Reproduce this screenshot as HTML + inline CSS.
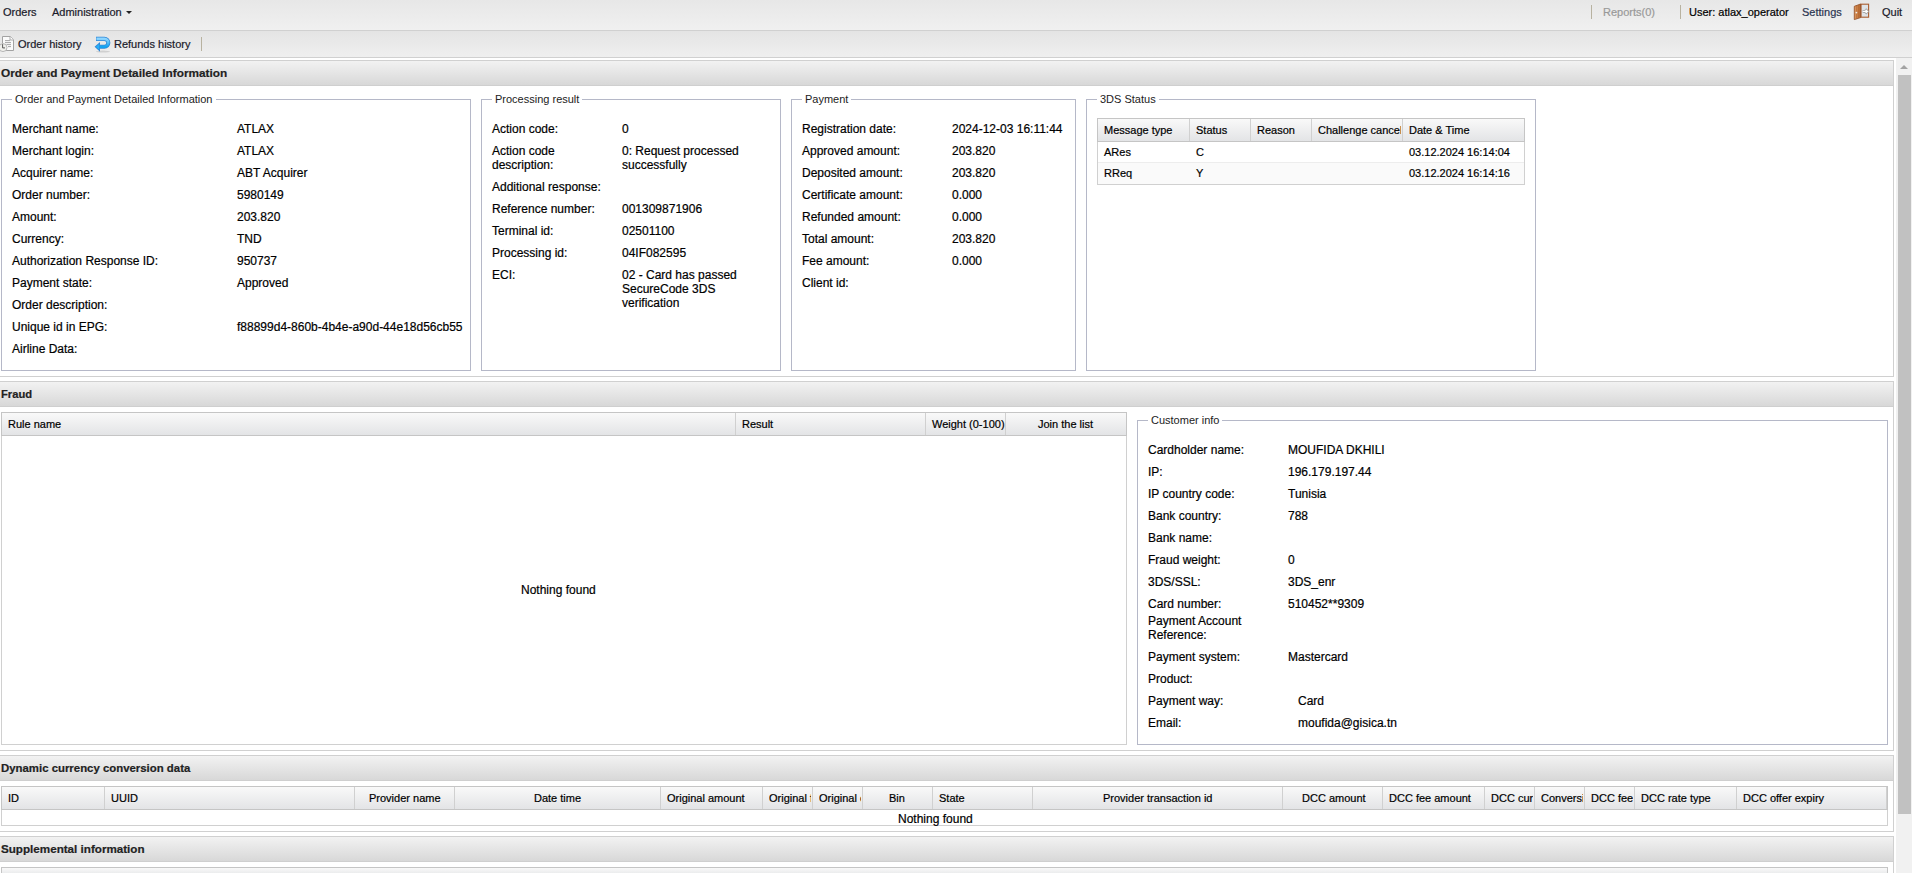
<!DOCTYPE html><html><head><meta charset="utf-8"><style>
html,body{margin:0;padding:0;width:1912px;height:873px;overflow:hidden;background:#fff;font-family:"Liberation Sans",sans-serif;}
.t{position:absolute;white-space:pre;line-height:14px;-webkit-text-stroke:0.2px currentColor;}
.b{position:absolute;box-sizing:border-box;}
.hdr{position:absolute;box-sizing:border-box;background:linear-gradient(#f2f2f2,#d8d8d8);border-top:1px solid #d0d0d0;border-bottom:1px solid #cfcfcf;}
.fs{position:absolute;box-sizing:border-box;border:1px solid #b5b8c8;}
.lg{position:absolute;background:#fff;padding:0 3px;font-size:11px;line-height:13px;color:#222;white-space:pre;}
.gh{position:absolute;box-sizing:border-box;background:linear-gradient(#f9f9f9,#e3e4e6);border:1px solid #c5c5c5;}
.gs{position:absolute;width:1px;background:#cfcfcf;}
</style></head><body>
<div class="b" style="left:0px;top:0px;width:1912px;height:30px;background:linear-gradient(#e7e7e7,#f0f0f0);"></div>
<div class="b" style="left:0px;top:30px;width:1912px;height:1px;background:#d0d0d0;"></div>
<div class="b" style="left:0px;top:31px;width:1912px;height:26px;background:linear-gradient(#e4e4e4,#efefef);"></div>
<div class="b" style="left:0px;top:57px;width:1912px;height:1px;background:#d0d0d0;"></div>
<div class="b" style="left:0px;top:58px;width:1912px;height:2px;background:#fff;"></div>
<div class="t" style="left:3px;top:5px;font-size:11px;color:#1a1a2a;">Orders</div>
<div class="t" style="left:52px;top:5px;font-size:11px;color:#1a1a2a;">Administration</div>
<div class="b" style="left:126px;top:11px;width:0;height:0;border-left:3px solid transparent;border-right:3px solid transparent;border-top:3px solid #222;"></div>
<div class="b" style="left:1591px;top:5px;width:1px;height:14px;background:#b8b2a0;"></div>
<div class="t" style="left:1603px;top:5px;font-size:11px;color:#999;">Reports(0)</div>
<div class="b" style="left:1680px;top:5px;width:1px;height:14px;background:#b8b2a0;"></div>
<div class="t" style="left:1689px;top:5px;font-size:11px;color:#000;">User: atlax_operator</div>
<div class="t" style="left:1802px;top:5px;font-size:11px;color:#2a3550;">Settings</div>
<svg class="b" style="left:1850px;top:0px" width="24" height="24" viewBox="0 0 24 24">
<defs><linearGradient id="dg" x1="0" x2="1" y1="0" y2="0"><stop offset="0" stop-color="#e09a60"/><stop offset="1" stop-color="#b5672f"/></linearGradient></defs>
<rect x="11" y="4.2" width="7.6" height="13" fill="#dfe3e7" stroke="#a95e32" stroke-width="1.1"/>
<path d="M12.6 11.4 h3.6 M15.3 9.3 l2.4 2.1 l-2.4 2.1" stroke="#9a9a9a" stroke-width="2.6" fill="none" stroke-linejoin="round"/>
<path d="M12.6 11.4 h3.8 M15.6 9.8 l1.8 1.6 l-1.8 1.6" stroke="#fff" stroke-width="1.3" fill="none"/>
<path d="M4.3 6.3 L10.6 4 L10.6 17.6 L4.3 19.6 Z" fill="url(#dg)" stroke="#8f4a22" stroke-width="0.8"/>
<path d="M6.6 6 v12.5 M8.6 5.2 v12.6" stroke="#a85a2a" stroke-width="0.6" opacity="0.7"/>
<circle cx="6.4" cy="12.6" r="0.9" fill="#eee"/>
</svg>
<div class="t" style="left:1882px;top:5px;font-size:11px;color:#1a1a2a;">Quit</div>
<svg class="b" style="left:0px;top:32px" width="20" height="24" viewBox="0 0 20 24">
<path d="M2.5 4.5 H10.3 L13.5 7.7 V18.5 H2.5 Z" fill="#fbfbfb" stroke="#a3a3a3" stroke-width="1"/>
<path d="M10 4.5 V8 H13.5" fill="#fff" stroke="#a3a3a3" stroke-width="0.9"/>
<path d="M5 8.6 H10 M5 10.6 H11 M6.5 12.6 H11 M8 14.6 H11" stroke="#9a9a9a" stroke-width="0.9"/>
<circle cx="3" cy="15.6" r="4" fill="#f0f0ec" stroke="#b8b8b8" stroke-width="1"/>
<path d="M2.6 12.2 V15.9 H5" stroke="#505050" stroke-width="0.95" fill="none"/>
</svg>
<div class="t" style="left:18px;top:37px;font-size:11px;color:#1a1a2a;">Order history</div>
<svg class="b" style="left:92px;top:32px" width="24" height="24" viewBox="0 0 24 24">
<defs><linearGradient id="rg" x1="0" x2="0" y1="0" y2="1"><stop offset="0" stop-color="#8fd6ff"/><stop offset="1" stop-color="#12a2f0"/></linearGradient></defs>
<ellipse cx="11" cy="19.6" rx="7" ry="1" fill="#000" opacity="0.12"/>
<path d="M4 6.9 H12.4 A3.9 3.9 0 0 1 12.4 14.7 H7.6" stroke="#2f86d6" stroke-width="4.1" fill="none"/>
<path d="M4.4 6.9 H12.4 A3.9 3.9 0 0 1 12.4 14.7 H7.6" stroke="url(#rg)" stroke-width="2.6" fill="none"/>
<path d="M2.6 14.8 L8 10 L8 19.8 Z" fill="#2f86d6"/>
<path d="M3.9 14.8 L7.3 11.7 L7.3 17.9 Z" fill="#26b0f8"/>
</svg>
<div class="t" style="left:114px;top:37px;font-size:11px;color:#1a1a2a;">Refunds history</div>
<div class="b" style="left:201px;top:37px;width:1px;height:14px;background:#b8b2a0;"></div>
<div class="b" style="left:1894px;top:58px;width:18px;height:815px;background:#f1f1f1;"></div>
<div class="b" style="left:1894px;top:58px;width:2px;height:815px;background:#fff;"></div>
<div class="b" style="left:1900px;top:65px;width:0;height:0;border-left:4px solid transparent;border-right:4px solid transparent;border-bottom:4px solid #a3a3a3;"></div>
<div class="b" style="left:1898px;top:75px;width:13px;height:739px;background:#c1c1c1;"></div>
<div class="hdr" style="left:0px;top:60px;width:1894px;height:26px;border-right:1px solid #d0d0d0;"></div>
<div class="t" style="left:1px;top:66px;font-size:11.8px;color:#222;font-weight:bold;">Order and Payment Detailed Information</div>
<div class="b" style="left:1893px;top:86px;width:1px;height:290px;background:#d0d0d0;"></div>
<div class="b" style="left:0px;top:376px;width:1894px;height:1px;background:#d0d0d0;"></div>
<div class="hdr" style="left:0px;top:381px;width:1894px;height:26px;border-right:1px solid #d0d0d0;"></div>
<div class="t" style="left:1px;top:387px;font-size:11.2px;color:#222;font-weight:bold;">Fraud</div>
<div class="b" style="left:1893px;top:407px;width:1px;height:343px;background:#d0d0d0;"></div>
<div class="b" style="left:0px;top:750px;width:1894px;height:1px;background:#d0d0d0;"></div>
<div class="hdr" style="left:0px;top:755px;width:1894px;height:26px;border-right:1px solid #d0d0d0;"></div>
<div class="t" style="left:1px;top:761px;font-size:11.4px;color:#222;font-weight:bold;">Dynamic currency conversion data</div>
<div class="b" style="left:1893px;top:781px;width:1px;height:50px;background:#d0d0d0;"></div>
<div class="b" style="left:0px;top:831px;width:1894px;height:1px;background:#d0d0d0;"></div>
<div class="hdr" style="left:0px;top:836px;width:1894px;height:26px;border-right:1px solid #d0d0d0;"></div>
<div class="t" style="left:1px;top:842px;font-size:11.65px;color:#222;font-weight:bold;">Supplemental information</div>
<div class="b" style="left:1893px;top:862px;width:1px;height:11px;background:#d0d0d0;"></div>
<div class="fs" style="left:1px;top:99px;width:470px;height:272px;"></div>
<div class="lg" style="left:12px;top:93px;">Order and Payment Detailed Information</div>
<div class="fs" style="left:481px;top:99px;width:300px;height:272px;"></div>
<div class="lg" style="left:492px;top:93px;">Processing result</div>
<div class="fs" style="left:791px;top:99px;width:285px;height:272px;"></div>
<div class="lg" style="left:802px;top:93px;">Payment</div>
<div class="fs" style="left:1086px;top:99px;width:450px;height:272px;"></div>
<div class="lg" style="left:1097px;top:93px;">3DS Status</div>
<div class="t" style="left:12px;top:122px;font-size:12px;color:#000;">Merchant name:</div>
<div class="t" style="left:237px;top:122px;font-size:12px;color:#000;">ATLAX</div>
<div class="t" style="left:12px;top:144px;font-size:12px;color:#000;">Merchant login:</div>
<div class="t" style="left:237px;top:144px;font-size:12px;color:#000;">ATLAX</div>
<div class="t" style="left:12px;top:166px;font-size:12px;color:#000;">Acquirer name:</div>
<div class="t" style="left:237px;top:166px;font-size:12px;color:#000;">ABT Acquirer</div>
<div class="t" style="left:12px;top:188px;font-size:12px;color:#000;">Order number:</div>
<div class="t" style="left:237px;top:188px;font-size:12px;color:#000;">5980149</div>
<div class="t" style="left:12px;top:210px;font-size:12px;color:#000;">Amount:</div>
<div class="t" style="left:237px;top:210px;font-size:12px;color:#000;">203.820</div>
<div class="t" style="left:12px;top:232px;font-size:12px;color:#000;">Currency:</div>
<div class="t" style="left:237px;top:232px;font-size:12px;color:#000;">TND</div>
<div class="t" style="left:12px;top:254px;font-size:12px;color:#000;">Authorization Response ID:</div>
<div class="t" style="left:237px;top:254px;font-size:12px;color:#000;">950737</div>
<div class="t" style="left:12px;top:276px;font-size:12px;color:#000;">Payment state:</div>
<div class="t" style="left:237px;top:276px;font-size:12px;color:#000;">Approved</div>
<div class="t" style="left:12px;top:298px;font-size:12px;color:#000;">Order description:</div>
<div class="t" style="left:12px;top:320px;font-size:12px;color:#000;">Unique id in EPG:</div>
<div class="t" style="left:237px;top:320px;font-size:12px;color:#000;">f88899d4-860b-4b4e-a90d-44e18d56cb55</div>
<div class="t" style="left:12px;top:342px;font-size:12px;color:#000;">Airline Data:</div>
<div class="t" style="left:492px;top:122px;font-size:12px;color:#000;">Action code:</div>
<div class="t" style="left:622px;top:122px;font-size:12px;color:#000;">0</div>
<div class="t" style="left:492px;top:144px;font-size:12px;color:#000;">Action code</div>
<div class="t" style="left:492px;top:158px;font-size:12px;color:#000;">description:</div>
<div class="t" style="left:622px;top:144px;font-size:12px;color:#000;">0: Request processed</div>
<div class="t" style="left:622px;top:158px;font-size:12px;color:#000;">successfully</div>
<div class="t" style="left:492px;top:180px;font-size:12px;color:#000;">Additional response:</div>
<div class="t" style="left:492px;top:202px;font-size:12px;color:#000;">Reference number:</div>
<div class="t" style="left:622px;top:202px;font-size:12px;color:#000;">001309871906</div>
<div class="t" style="left:492px;top:224px;font-size:12px;color:#000;">Terminal id:</div>
<div class="t" style="left:622px;top:224px;font-size:12px;color:#000;">02501100</div>
<div class="t" style="left:492px;top:246px;font-size:12px;color:#000;">Processing id:</div>
<div class="t" style="left:622px;top:246px;font-size:12px;color:#000;">04IF082595</div>
<div class="t" style="left:492px;top:268px;font-size:12px;color:#000;">ECI:</div>
<div class="t" style="left:622px;top:268px;font-size:12px;color:#000;">02 - Card has passed</div>
<div class="t" style="left:622px;top:282px;font-size:12px;color:#000;">SecureCode 3DS</div>
<div class="t" style="left:622px;top:296px;font-size:12px;color:#000;">verification</div>
<div class="t" style="left:802px;top:122px;font-size:12px;color:#000;">Registration date:</div>
<div class="t" style="left:952px;top:122px;font-size:12px;color:#000;">2024-12-03 16:11:44</div>
<div class="t" style="left:802px;top:144px;font-size:12px;color:#000;">Approved amount:</div>
<div class="t" style="left:952px;top:144px;font-size:12px;color:#000;">203.820</div>
<div class="t" style="left:802px;top:166px;font-size:12px;color:#000;">Deposited amount:</div>
<div class="t" style="left:952px;top:166px;font-size:12px;color:#000;">203.820</div>
<div class="t" style="left:802px;top:188px;font-size:12px;color:#000;">Certificate amount:</div>
<div class="t" style="left:952px;top:188px;font-size:12px;color:#000;">0.000</div>
<div class="t" style="left:802px;top:210px;font-size:12px;color:#000;">Refunded amount:</div>
<div class="t" style="left:952px;top:210px;font-size:12px;color:#000;">0.000</div>
<div class="t" style="left:802px;top:232px;font-size:12px;color:#000;">Total amount:</div>
<div class="t" style="left:952px;top:232px;font-size:12px;color:#000;">203.820</div>
<div class="t" style="left:802px;top:254px;font-size:12px;color:#000;">Fee amount:</div>
<div class="t" style="left:952px;top:254px;font-size:12px;color:#000;">0.000</div>
<div class="t" style="left:802px;top:276px;font-size:12px;color:#000;">Client id:</div>
<div class="b" style="left:1097px;top:118px;width:428px;height:67px;border:1px solid #d0d0d0;"></div>
<div class="gh" style="left:1097px;top:118px;width:428px;height:24px;"></div>
<div class="b" style="left:1189px;top:119px;width:1px;height:22px;background:#d0d0d0;"></div>
<div class="b" style="left:1250px;top:119px;width:1px;height:22px;background:#d0d0d0;"></div>
<div class="b" style="left:1311px;top:119px;width:1px;height:22px;background:#d0d0d0;"></div>
<div class="b" style="left:1402px;top:119px;width:1px;height:22px;background:#d0d0d0;"></div>
<div class="b" style="left:1098px;top:162px;width:426px;height:1px;background:#ededed;"></div>
<div class="b" style="left:1098px;top:163px;width:426px;height:21px;background:#fafafa;"></div>
<div class="t" style="left:1104px;top:123px;font-size:11px;color:#000;">Message type</div>
<div class="t" style="left:1196px;top:123px;font-size:11px;color:#000;">Status</div>
<div class="t" style="left:1257px;top:123px;font-size:11px;color:#000;">Reason</div>
<div class="t" style="left:1409px;top:123px;font-size:11px;color:#000;">Date &amp; Time</div>
<div class="t" style="left:1318px;top:123px;font-size:11px;width:83px;overflow:hidden;">Challenge cancel</div>
<div class="t" style="left:1104px;top:145px;font-size:11px;color:#000;">ARes</div>
<div class="t" style="left:1196px;top:145px;font-size:11px;color:#000;">C</div>
<div class="t" style="left:1409px;top:145px;font-size:11px;color:#000;">03.12.2024 16:14:04</div>
<div class="t" style="left:1104px;top:166px;font-size:11px;color:#000;">RReq</div>
<div class="t" style="left:1196px;top:166px;font-size:11px;color:#000;">Y</div>
<div class="t" style="left:1409px;top:166px;font-size:11px;color:#000;">03.12.2024 16:14:16</div>
<div class="b" style="left:1px;top:412px;width:1126px;height:333px;border:1px solid #d0d0d0;"></div>
<div class="gh" style="left:1px;top:412px;width:1126px;height:24px;"></div>
<div class="b" style="left:735px;top:413px;width:1px;height:22px;background:#d0d0d0;"></div>
<div class="b" style="left:925px;top:413px;width:1px;height:22px;background:#d0d0d0;"></div>
<div class="b" style="left:1005px;top:413px;width:1px;height:22px;background:#d0d0d0;"></div>
<div class="t" style="left:8px;top:417px;font-size:11px;color:#000;">Rule name</div>
<div class="t" style="left:742px;top:417px;font-size:11px;color:#000;">Result</div>
<div class="t" style="left:932px;top:417px;font-size:11px;color:#000;">Weight (0-100)</div>
<div class="t" style="left:1038px;top:417px;font-size:11px;color:#000;">Join the list</div>
<div class="t" style="left:521px;top:583px;font-size:12px;color:#000;">Nothing found</div>
<div class="fs" style="left:1137px;top:420px;width:751px;height:325px;"></div>
<div class="lg" style="left:1148px;top:414px;">Customer info</div>
<div class="t" style="left:1148px;top:443px;font-size:12px;color:#000;">Cardholder name:</div>
<div class="t" style="left:1288px;top:443px;font-size:12px;color:#000;">MOUFIDA DKHILI</div>
<div class="t" style="left:1148px;top:465px;font-size:12px;color:#000;">IP:</div>
<div class="t" style="left:1288px;top:465px;font-size:12px;color:#000;">196.179.197.44</div>
<div class="t" style="left:1148px;top:487px;font-size:12px;color:#000;">IP country code:</div>
<div class="t" style="left:1288px;top:487px;font-size:12px;color:#000;">Tunisia</div>
<div class="t" style="left:1148px;top:509px;font-size:12px;color:#000;">Bank country:</div>
<div class="t" style="left:1288px;top:509px;font-size:12px;color:#000;">788</div>
<div class="t" style="left:1148px;top:531px;font-size:12px;color:#000;">Bank name:</div>
<div class="t" style="left:1148px;top:553px;font-size:12px;color:#000;">Fraud weight:</div>
<div class="t" style="left:1288px;top:553px;font-size:12px;color:#000;">0</div>
<div class="t" style="left:1148px;top:575px;font-size:12px;color:#000;">3DS/SSL:</div>
<div class="t" style="left:1288px;top:575px;font-size:12px;color:#000;">3DS_enr</div>
<div class="t" style="left:1148px;top:597px;font-size:12px;color:#000;">Card number:</div>
<div class="t" style="left:1288px;top:597px;font-size:12px;color:#000;">510452**9309</div>
<div class="t" style="left:1148px;top:614px;font-size:12px;color:#000;">Payment Account</div>
<div class="t" style="left:1148px;top:628px;font-size:12px;color:#000;">Reference:</div>
<div class="t" style="left:1148px;top:650px;font-size:12px;color:#000;">Payment system:</div>
<div class="t" style="left:1288px;top:650px;font-size:12px;color:#000;">Mastercard</div>
<div class="t" style="left:1148px;top:672px;font-size:12px;color:#000;">Product:</div>
<div class="t" style="left:1148px;top:694px;font-size:12px;color:#000;">Payment way:</div>
<div class="t" style="left:1298px;top:694px;font-size:12px;color:#000;">Card</div>
<div class="t" style="left:1148px;top:716px;font-size:12px;color:#000;">Email:</div>
<div class="t" style="left:1298px;top:716px;font-size:12px;color:#000;">moufida@gisica.tn</div>
<div class="b" style="left:1px;top:786px;width:1887px;height:40px;border:1px solid #d0d0d0;"></div>
<div class="gh" style="left:1px;top:786px;width:1887px;height:24px;"></div>
<div class="b" style="left:104px;top:787px;width:1px;height:22px;background:#d0d0d0;"></div>
<div class="b" style="left:354px;top:787px;width:1px;height:22px;background:#d0d0d0;"></div>
<div class="b" style="left:454px;top:787px;width:1px;height:22px;background:#d0d0d0;"></div>
<div class="b" style="left:660px;top:787px;width:1px;height:22px;background:#d0d0d0;"></div>
<div class="b" style="left:762px;top:787px;width:1px;height:22px;background:#d0d0d0;"></div>
<div class="b" style="left:812px;top:787px;width:1px;height:22px;background:#d0d0d0;"></div>
<div class="b" style="left:862px;top:787px;width:1px;height:22px;background:#d0d0d0;"></div>
<div class="b" style="left:932px;top:787px;width:1px;height:22px;background:#d0d0d0;"></div>
<div class="b" style="left:1032px;top:787px;width:1px;height:22px;background:#d0d0d0;"></div>
<div class="b" style="left:1282px;top:787px;width:1px;height:22px;background:#d0d0d0;"></div>
<div class="b" style="left:1382px;top:787px;width:1px;height:22px;background:#d0d0d0;"></div>
<div class="b" style="left:1484px;top:787px;width:1px;height:22px;background:#d0d0d0;"></div>
<div class="b" style="left:1534px;top:787px;width:1px;height:22px;background:#d0d0d0;"></div>
<div class="b" style="left:1584px;top:787px;width:1px;height:22px;background:#d0d0d0;"></div>
<div class="b" style="left:1634px;top:787px;width:1px;height:22px;background:#d0d0d0;"></div>
<div class="b" style="left:1736px;top:787px;width:1px;height:22px;background:#d0d0d0;"></div>
<div class="b" style="left:1886px;top:787px;width:1px;height:22px;background:#d0d0d0;"></div>
<div class="t" style="left:8px;top:791px;font-size:11px;color:#000;">ID</div>
<div class="t" style="left:111px;top:791px;font-size:11px;color:#000;">UUID</div>
<div class="t" style="left:369px;top:791px;font-size:11px;color:#000;">Provider name</div>
<div class="t" style="left:534px;top:791px;font-size:11px;color:#000;">Date time</div>
<div class="t" style="left:667px;top:791px;font-size:11px;color:#000;">Original amount</div>
<div class="t" style="left:769px;top:791px;font-size:11px;width:42px;overflow:hidden;">Original f</div>
<div class="t" style="left:819px;top:791px;font-size:11px;width:42px;overflow:hidden;">Original c</div>
<div class="t" style="left:889px;top:791px;font-size:11px;color:#000;">Bin</div>
<div class="t" style="left:939px;top:791px;font-size:11px;color:#000;">State</div>
<div class="t" style="left:1103px;top:791px;font-size:11px;color:#000;">Provider transaction id</div>
<div class="t" style="left:1302px;top:791px;font-size:11px;color:#000;">DCC amount</div>
<div class="t" style="left:1389px;top:791px;font-size:11px;color:#000;">DCC fee amount</div>
<div class="t" style="left:1491px;top:791px;font-size:11px;width:42px;overflow:hidden;">DCC curr</div>
<div class="t" style="left:1541px;top:791px;font-size:11px;width:42px;overflow:hidden;">Conversion</div>
<div class="t" style="left:1591px;top:791px;font-size:11px;width:42px;overflow:hidden;">DCC fee</div>
<div class="t" style="left:1641px;top:791px;font-size:11px;color:#000;">DCC rate type</div>
<div class="t" style="left:1743px;top:791px;font-size:11px;color:#000;">DCC offer expiry</div>
<div class="t" style="left:898px;top:812px;font-size:12px;color:#000;">Nothing found</div>
<div class="gh" style="left:1px;top:867px;width:1887px;height:10px;"></div>
</body></html>
